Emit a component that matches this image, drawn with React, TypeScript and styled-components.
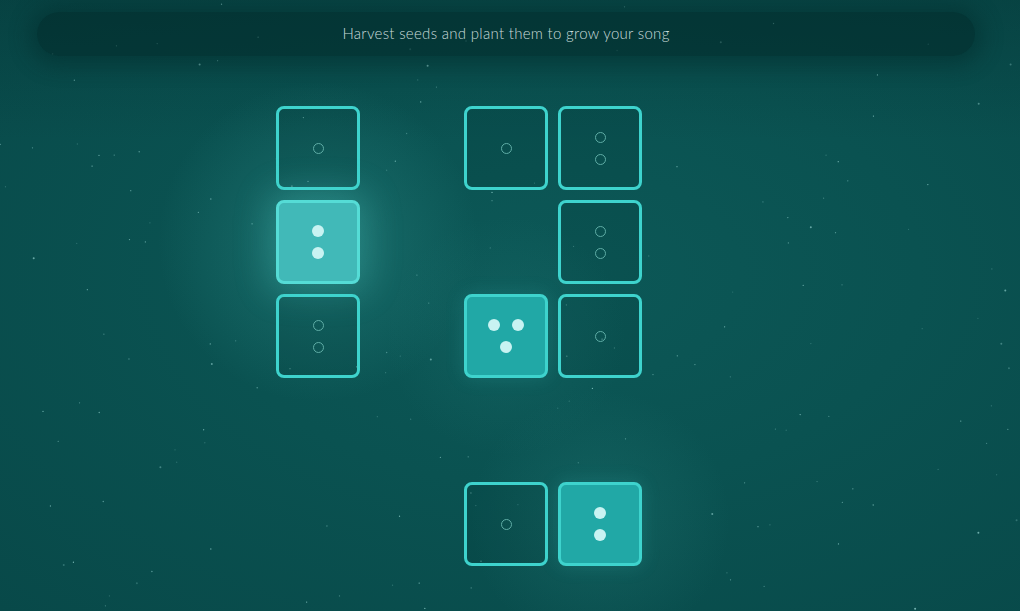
import React from "react";
import styled, { createGlobalStyle } from "styled-components";

type TileKind = "empty" | "filled" | "lit";

type CellType = {
  kind: TileKind;
  marks: number;
} | null;

const board: CellType[][] = [
  [{ kind: "empty", marks: 1 }, null, { kind: "empty", marks: 1 }, { kind: "empty", marks: 2 }],
  [{ kind: "lit", marks: 2 }, null, null, { kind: "empty", marks: 2 }],
  [{ kind: "empty", marks: 2 }, null, { kind: "filled", marks: 3 }, { kind: "empty", marks: 1 }],
  [null, null, null, null],
  [null, null, { kind: "empty", marks: 1 }, { kind: "filled", marks: 2 }],
];

// small seeded random so the sky stays the same every render
function makeStars(count: number) {
  let seed = 17;
  const rnd = () => {
    seed = (seed * 16807) % 2147483647;
    return seed / 2147483647;
  };
  const stars = [];
  for (let i = 0; i < count; i++) {
    stars.push({
      x: rnd() * 1020,
      y: rnd() * 611,
      r: rnd() > 0.85 ? 1 : 0.65,
      o: 0.2 + rnd() * 0.5,
    });
  }
  return stars;
}

const stars = makeStars(170);

const GlobalStyle = createGlobalStyle`
  html, body {
    margin: 0;
    padding: 0;
    background: #0a4f4f;
  }
  * {
    box-sizing: border-box;
  }
`;

const Page = styled.div`
  position: relative;
  width: 1020px;
  height: 611px;
  overflow: hidden;
  font-family: "Lato", "Noto Sans", sans-serif;
  background:
    radial-gradient(circle at 318px 242px, rgba(60, 170, 165, 0.32) 0, rgba(60, 170, 165, 0) 160px),
    radial-gradient(circle at 600px 520px, rgba(50, 150, 145, 0.22) 0, rgba(50, 150, 145, 0) 130px),
    radial-gradient(circle at 506px 336px, rgba(50, 150, 145, 0.15) 0, rgba(50, 150, 145, 0) 120px),
    linear-gradient(180deg, rgba(4, 50, 50, 0.35) 0, rgba(4, 50, 50, 0) 140px),
    radial-gradient(ellipse at 55% 45%, #0c5857 0%, #0a5251 45%, #084949 100%);
`;

const Sky = styled.svg`
  position: absolute;
  inset: 0;
  pointer-events: none;
`;

const Content = styled.div`
  position: relative;
  display: flex;
  flex-direction: column;
  padding-top: 12px;
`;

const Banner = styled.div`
  width: 938px;
  height: 44px;
  margin-left: 37px;
  padding-bottom: 3px;
  border-radius: 22px;
  display: flex;
  align-items: center;
  justify-content: center;
  background: rgba(1, 44, 44, 0.6);
  box-shadow: 0 2px 20px 8px rgba(2, 40, 40, 0.42);
  color: #c9dcdb;
  font-size: 15px;
  font-weight: 300;
  letter-spacing: 0.3px;
`;

const Board = styled.div`
  margin: 50px 0 0 276px;
  display: grid;
  grid-template-columns: repeat(4, 84px);
  grid-auto-rows: 84px;
  gap: 10px;
`;

const Slot = styled.div``;

const Tile = styled.div<{ $kind: TileKind }>`
  border: 3px solid ${(p) => (p.$kind === "lit" ? "#55dcd6" : "#3ed3cd")};
  border-radius: 8px;
  display: flex;
  align-items: center;
  justify-content: center;
  background: ${(p) =>
    p.$kind === "lit"
      ? "#41b9b8"
      : p.$kind === "filled"
      ? "#21a8a6"
      : "rgba(0, 40, 40, 0.12)"};
  box-shadow: ${(p) =>
    p.$kind === "lit"
      ? "0 0 34px 8px rgba(90, 220, 210, 0.25)"
      : p.$kind === "filled"
      ? "0 0 18px 2px rgba(60, 200, 195, 0.14)"
      : "none"};
`;

const Marks = styled.div<{ $three: boolean }>`
  display: grid;
  grid-template-columns: ${(p) => (p.$three ? "12px 12px" : "12px")};
  column-gap: 12px;
  row-gap: 10px;
  justify-items: center;
`;

const Ring = styled.span`
  width: 11px;
  height: 11px;
  border-radius: 50%;
  border: 1px solid #5fada6;
  margin: 0.5px;
`;

const Dot = styled.span<{ $wide?: boolean }>`
  width: 12px;
  height: 12px;
  border-radius: 50%;
  background: #c8f3f2;
  grid-column: ${(p) => (p.$wide ? "1 / span 2" : "auto")};
`;

function TileView({ cell }: { cell: CellType }) {
  if (!cell) return <Slot />;
  const three = cell.marks === 3;
  const items = Array.from({ length: cell.marks });
  return (
    <Tile $kind={cell.kind}>
      <Marks $three={three}>
        {items.map((_, i) =>
          cell.kind === "empty" ? (
            <Ring key={i} />
          ) : (
            <Dot key={i} $wide={three && i === 2} />
          )
        )}
      </Marks>
    </Tile>
  );
}

export default function App(): React.ReactElement {
  return (
    <>
      <GlobalStyle />
      <Page>
        <Sky width="1020" height="611" viewBox="0 0 1020 611">
          {stars.map((s, i) => (
            <circle key={i} cx={s.x} cy={s.y} r={s.r} fill="#a8e6e2" opacity={s.o} />
          ))}
        </Sky>
        <Content>
          <Banner>Harvest seeds and plant them to grow your song</Banner>
          <Board>
            {board.map((row, r) =>
              row.map((cell, c) => <TileView key={`${r}-${c}`} cell={cell} />)
            )}
          </Board>
        </Content>
      </Page>
    </>
  );
}
